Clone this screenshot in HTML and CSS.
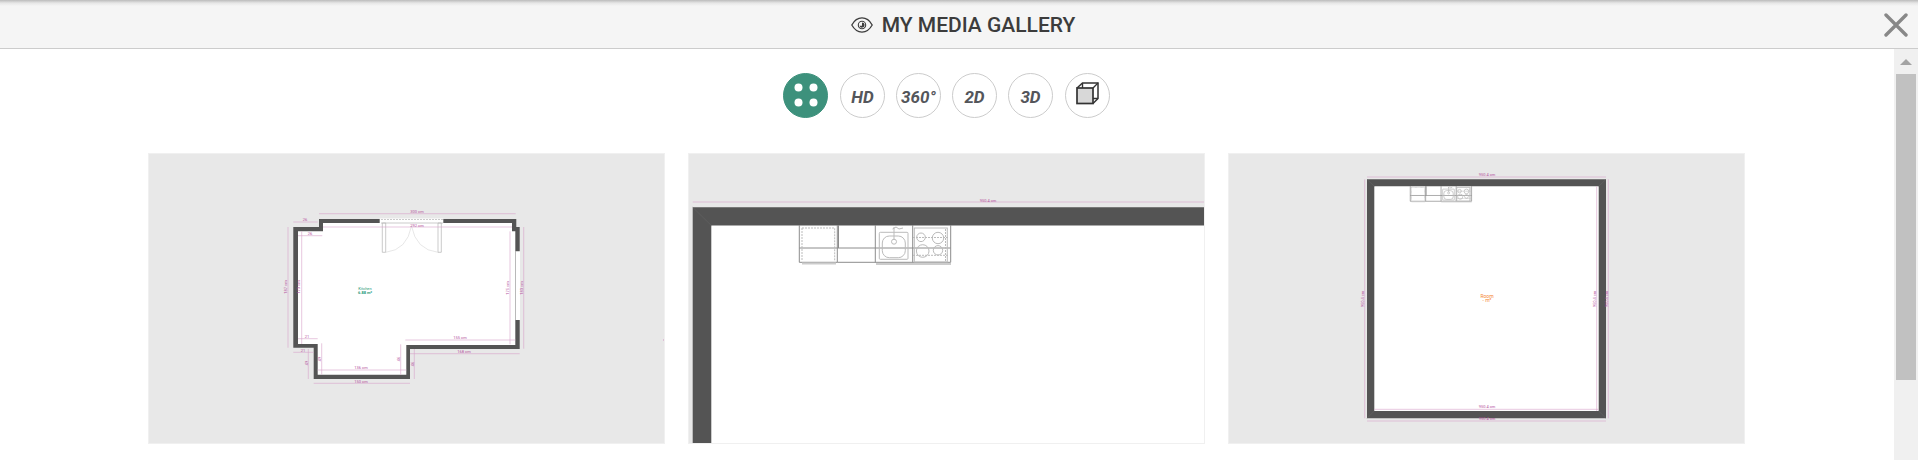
FILE: index.html
```html
<!DOCTYPE html>
<html lang="en">
<head>
    <meta charset="UTF-8">
    <title>My Media Gallery</title>
    <link rel="stylesheet" href="styles.css">
</head>
<body>
<header class="header">
    <h1 class="title">
        <svg class="eye" viewBox="0 0 22 16" aria-hidden="true">
            <path d="M.8 8C6 -1.400 16 -1.400 21.200 8C16 17.400 6 17.400 .8 8Z" fill="none" stroke="#3c3c3c" stroke-width="1.3"/>
            <circle cx="11" cy="8" r="3.700" fill="none" stroke="#3c3c3c" stroke-width="1.1"/>
            <path d="M11 5.400a2.600 2.600 0 1 1 -2.500 3.300h2.500z" fill="#3c3c3c"/>
        </svg>
        MY MEDIA GALLERY
    </h1>
    <button class="close" type="button" aria-label="Close">
        <svg viewBox="0 0 24 24"><path d="M2 2L22 22M22 2L2 22" stroke="#888" stroke-width="3.4" stroke-linecap="round"/></svg>
    </button>
</header>
<div class="content">
    <main class="gallery">
        <nav class="filters">
            <button class="filter active" type="button" aria-label="All">
                <svg viewBox="0 0 45 45"><g fill="#fff"><circle cx="15.5" cy="14.5" r="4"/><circle cx="30.5" cy="14.5" r="4"/><circle cx="15.5" cy="29.5" r="4"/><circle cx="30.5" cy="29.5" r="4"/></g></svg>
            </button>
            <div class="filter-group">
                <button class="filter" type="button">HD</button>
                <button class="filter" type="button">360°</button>
                <button class="filter" type="button">2D</button>
                <button class="filter" type="button">3D</button>
            </div>
            <button class="filter" type="button" aria-label="Model">
                <svg viewBox="0 0 45 45">
                    <path d="M12 15L17.500 10H33V25.500L28 30.500" fill="#fff" stroke="#333" stroke-width="1.500"/>
                    <path d="M17.500 10V15M28 15L33 10M28 25.500H33" fill="none" stroke="#333" stroke-width="1.400"/>
                    <rect x="12" y="15" width="16" height="15.500" fill="#d8d8d8" stroke="#333" stroke-width="1.700"/>
                </svg>
            </button>
        </nav>
        <div class="cards">
            <a class="card" href="#" aria-label="Kitchen plan">
                <svg class="plan" viewBox="0 0 515 289">
                    <path class="wall" d="M170 65H367.300V73H370.700V195H261V225H164.700V193.700H144.300V73H170Z"/>
                    <path class="floor" d="M149 77.300H174V69H363V77.300H366.300V191H257.300V220.700H168.700V190H149Z"/>
                    <!-- door and window -->
                    <path class="floor" d="M230.700 64.500H294.300V69.500H230.700ZM366.500 97.300H371V166H366.500Z"/>
                    <path class="thin" d="M366.500 97.300V166M232 69H294M233.300 69H236.700V98.300H233.300ZM289 69H292.300V98.300H289Z"/>
                    <path class="faint" d="M236.700 98.300Q258 96 262.500 72Q267 96 289 98.300"/>
                    <path class="thin dashed" d="M232 65.500H294"/>
                    <g class="dim">
                        <path d="M170 59.700H366.700M144.300 68H168.700M149 81.700H173.300M174 73H363M149 184.700H168.700M144.300 198.300H164.700M168.700 216H257.300M164.700 229.300H261M256.300 186H366.300M261 199.700H370.700"/>
                        <path d="M139 73V193.700M152.700 77.300V190M361 77.300V190.300M374.700 73V194.700M159.300 195V225M172.700 189.300V220.700M251.700 190.300V220.700M265.300 195V225M514.500 185V187"/>
                    </g>
                    <g class="label">
                        <text x="268" y="59">300 cm</text>
                        <text x="156" y="67">26</text>
                        <text x="161" y="81">26</text>
                        <text x="268" y="73">292 cm</text>
                        <text x="158" y="184">21</text>
                        <text x="154" y="198">21</text>
                        <text x="212" y="215">136 cm</text>
                        <text x="212" y="229">150 cm</text>
                        <text x="311" y="185">155 cm</text>
                        <text x="315" y="199">168 cm</text>
                        <text transform="translate(138 133) rotate(-90)">187 cm</text>
                        <text transform="translate(151 133) rotate(-90)">173 cm</text>
                        <text transform="translate(360 134) rotate(-90)">175 cm</text>
                        <text transform="translate(374 134) rotate(-90)">183 cm</text>
                        <text transform="translate(159 209) rotate(-90)">49</text>
                        <text transform="translate(172 205) rotate(-90)">49</text>
                        <text transform="translate(251 205) rotate(-90)">46</text>
                        <text transform="translate(265 210) rotate(-90)">46</text>
                    </g>
                    <g class="room green">
                        <text x="216" y="136">Kitchen</text>
                        <text x="216" y="140" font-weight="bold">6.88 m²</text>
                    </g>
                </svg>
            </a>
            <a class="card" href="#" aria-label="Room plan, detail">
                <svg class="plan" viewBox="0 0 515 289">
                    <defs>
                        <g id="units">
                            <path class="outline" d="M110.300 71V108.300H148.300V71M110.300 94H261.700M148.300 108.300H261.700V71M149.500 71V94M186.300 71V108.300M223.700 71V108.300"/>
                            <path class="detail dashed" d="M113 74H145.700V107M113 74V107M224 83.500H260M224 101.300H260M256.500 75V108"/>
                            <path class="shadow" d="M113 109.500H147M187 110H262"/>
                            <rect class="detail" x="190.300" y="78.300" width="28.700" height="27" rx="1"/>
                            <rect class="detail" x="193.300" y="82" width="23" height="21.700" rx="7"/>
                            <circle class="detail" cx="205" cy="87.700" r="2.500"/>
                            <path class="detail" d="M205 73V86M203.500 75L207 73L210 75L214 74"/>
                            <rect class="detail" x="225.300" y="74" width="33" height="34"/>
                            <circle class="detail" cx="232" cy="83.300" r="4.300"/>
                            <circle class="detail" cx="249" cy="84" r="5.700"/>
                            <circle class="detail" cx="233.700" cy="97" r="6.300"/>
                            <circle class="detail" cx="249" cy="96.300" r="4.700"/>
                        </g>
                    </defs>
                    <path class="wall" d="M3.700 53.300H515V289H3.700Z"/>
                    <path class="floor" d="M22.300 71.500H515V289H22.300Z"/>
                    <path class="mitre" d="M3.700 53.300L22.300 71.500"/>
                    <use href="#units" stroke-width="1"/>
                    <path class="dim" d="M3.700 48H515"/>
                    <g class="label">
                        <text x="299" y="48">950.4 cm</text>
                    </g>
                </svg>
            </a>
            <a class="card" href="#" aria-label="Room plan">
                <svg class="plan" viewBox="0 0 515 289">
                    <path class="wall" d="M138 25.300H377V264.300H138Z"/>
                    <path class="floor" d="M145.300 32.300H369.700V257H145.300Z"/>
                    <path class="mitre" d="M138 25.300L145.300 32.300M377 25.300L369.700 32.300M138 264.300L145.300 257M377 264.300L369.700 257"/>
                    <use href="#units" transform="translate(136.600 3.400) scale(.405)" stroke-width="1.800"/>
                    <path class="dim" d="M138 23H377M145.300 255.300H369.700M138 267H377M135.700 25.300V264.300M367.700 32.300V257M379.300 25.300V264.300"/>
                    <g class="label">
                        <text x="258" y="22">950.4 cm</text>
                        <text x="258" y="254">950.4 cm</text>
                        <text x="258" y="266">950.4 cm</text>
                        <text transform="translate(135 145) rotate(-90)">950.4 cm</text>
                        <text transform="translate(367 145) rotate(-90)">950.4 cm</text>
                        <text transform="translate(379 145) rotate(-90)">950.4 cm</text>
                    </g>
                    <g class="room orange">
                        <text x="258" y="144">Room</text>
                        <text x="258" y="148">- m²</text>
                    </g>
                </svg>
            </a>
        </div>
    </main>
    <div class="scrollbar" aria-hidden="true">
        <div class="scroll-up"></div>
        <div class="scroll-thumb"></div>
    </div>
</div>
</body>
</html>
```
FILE: styles.css
```css
*{
    margin: 0;
    padding: 0;
    box-sizing: border-box;
}
body{
    display: flex;
    flex-direction: column;
    height: 100vh;
    overflow: hidden;
    background-color: #fff;
    font-family: Roboto, "Liberation Sans", sans-serif;
}
button{
    border: none;
    background: none;
    font: inherit;
    cursor: pointer;
}
.header{
    display: grid;
    grid-template-columns: 1fr auto 1fr;
    align-items: center;
    height: 49px;
    padding: 2px 8px 0 16px;
    border-bottom: 1px solid #ccc;
    background: #f5f5f5 linear-gradient(#bbb, #e6e6e6 3px, #f5f5f5 6px);
}
.title{
    display: flex;
    grid-column: 2;
    align-items: center;
    gap: 9px;
    color: #3c3c3c;
    font-size: 21px;
    font-weight: 500;
    line-height: 24px;
}
.eye{
    width: 22px;
    height: 16px;
}
.close{
    justify-self: end;
    width: 28px;
    height: 24px;
}
.close svg{
    display: block;
    width: 24px;
    height: 24px;
    margin: 0 auto;
}
.content{
    display: flex;
    flex: 1;
    min-height: 0;
}
.gallery{
    flex: 1;
    overflow: hidden;
    padding: 24px 149px 0 148px;
}
.filters{
    display: flex;
    justify-content: center;
    gap: 12px;
    margin-bottom: 35px;
}
.filter-group{
    display: flex;
    gap: 11px;
}
.filter{
    width: 45px;
    height: 45px;
    padding-top: 3px;
    border: 1px solid #ccc;
    border-radius: 50%;
    color: #54565b;
    font-size: 17px;
    font-style: italic;
    font-weight: bold;
    line-height: 20px;
    text-align: center;
}
.filter svg{
    display: block;
    width: 45px;
    height: 45px;
    margin: -4px -1px -1px;
}
.filter.active{
    border-color: #3d917c;
    background-color: #3d917c;
}
.cards{
    display: grid;
    grid-template-columns: repeat(3, 1fr);
    gap: 23px;
}
.card{
    display: block;
    border: 1px solid #f0f0f0;
    background-color: #e8e8e8;
}
.plan{
    display: block;
    width: 100%;
}
.wall{
    fill: #545454;
}
.floor{
    fill: #fff;
}
.outline{
    fill: none;
    stroke: #8c8c8c;
}
.detail{
    fill: none;
    stroke: #bbb;
}
.thin{
    fill: none;
    stroke: #b5b5b5;
    stroke-width: .7;
}
.faint{
    fill: none;
    stroke: #ddd;
    stroke-width: .7;
}
.dashed{
    stroke-dasharray: 2 1;
}
.shadow{
    fill: none;
    stroke: #ccc;
    stroke-width: 2;
}
.mitre{
    stroke: #666;
    stroke-width: .5;
}
.dim{
    fill: none;
    stroke: #d6a3c9;
    stroke-width: .6;
}
.label{
    fill: #b5529d;
    font-size: 4px;
    text-anchor: middle;
}
.room{
    font-size: 4px;
    text-anchor: middle;
}
.green{
    fill: #2c9c7c;
}
.orange{
    fill: #f58634;
    font-size: 5px;
}
/* scrollbar */
.scrollbar{
    width: 24px;
    padding: 0 2px;
    background-color: #f0f0f0;
}
.scroll-up{
    height: 25px;
    padding: 10px 4px;
}
.scroll-up::before{
    content: "";
    display: block;
    width: 0;
    border: 6px solid transparent;
    border-top: none;
    border-bottom-color: #a3a3a3;
}
.scroll-thumb{
    height: 306px;
    background-color: #c1c1c1;
}
```
